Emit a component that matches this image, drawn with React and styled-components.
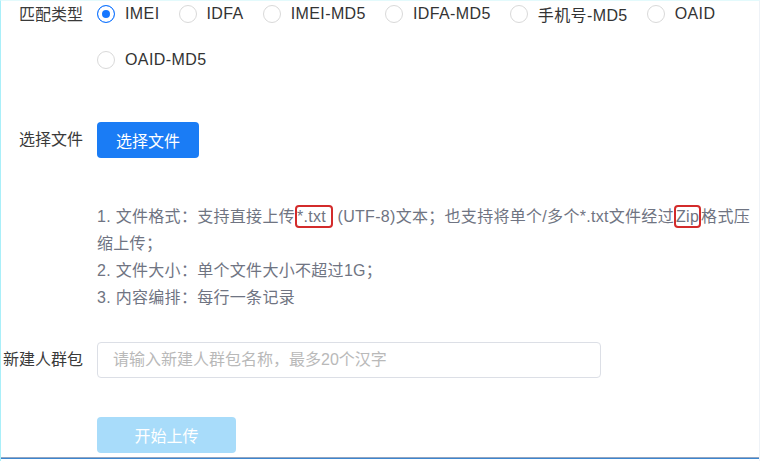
import React, { useState } from 'react';
import styled, { createGlobalStyle } from 'styled-components';

const GlobalStyle = createGlobalStyle`
    html, body {
        margin: 0;
        padding: 0;
        background: #fff;
    }
    body {
        font-family: "Liberation Sans", "Noto Sans CJK SC", sans-serif;
    }
`;

const Page = styled.div`
    box-sizing: border-box;
    width: 760px;
    height: 461px;
    border-left: 1px solid #a9eff9;
    border-top: 1px solid #e3fafc;
    border-right: 1px solid #eef2f7;
    display: flex;
    flex-direction: column;
    overflow: hidden;
`;

const Form = styled.div`
    flex: 1;
    display: flex;
    flex-direction: column;
`;

const Row = styled.div`
    display: flex;
    align-items: ${(p) => (p.top ? 'flex-start' : 'center')};
    gap: 14px;
    margin-top: ${(p) => p.gap || 0}px;
`;

const Label = styled.div`
    flex: 0 0 82px;
    text-align: right;
    font-size: 16px;
    line-height: 28px;
    color: #3a3a3a;
    white-space: nowrap;
`;

const Content = styled.div`
    flex: 1;
    min-width: 0;
    padding-right: 4px;
`;

const RadioGroup = styled.div`
    display: flex;
    flex-wrap: wrap;
    column-gap: 19px;
    row-gap: 18px;
    margin-top: -1px;
`;

const RadioItem = styled.label`
    display: inline-flex;
    align-items: center;
    gap: 10px;
    height: 28px;
    font-size: 16px;
    letter-spacing: 0.4px;
    color: #333;
    cursor: pointer;
`;

const Circle = styled.span`
    box-sizing: border-box;
    width: 18px;
    height: 18px;
    border-radius: 50%;
    border: 1px solid ${(p) => (p.checked ? '#1677ff' : '#d9d9d9')};
    background: ${(p) => (p.checked ? '#1677ff' : '#fff')};
    box-shadow: ${(p) => (p.checked ? 'inset 0 0 0 4px #fff' : 'none')};
`;

const PrimaryButton = styled.button`
    height: 36px;
    width: ${(p) => p.width}px;
    border: none;
    border-radius: 4px;
    background: ${(p) => (p.disabled ? '#a8dcfa' : '#1a7cf5')};
    color: #fff;
    font-family: inherit;
    font-size: 16px;
    cursor: ${(p) => (p.disabled ? 'not-allowed' : 'pointer')};
    padding: 0;
`;

const Tips = styled.div`
    font-size: 16px;
    line-height: 27px;
    letter-spacing: 0.3px;
    color: #6f7482;
`;

const Mark = styled.span`
    display: inline-block;
    border: 2px solid #d32b2b;
    border-radius: 4px;
    line-height: 19px;
    padding: 0;
`;

const Input = styled.input`
    box-sizing: border-box;
    width: 504px;
    height: 36px;
    border: 1px solid #dcdfe6;
    border-radius: 4px;
    padding: 0 15px;
    font-family: inherit;
    font-size: 16px;
    color: #333;
    outline: none;
    &::placeholder {
        color: #b9b9b9;
    }
`;

const BottomEdge = styled.div`
    height: 1px;
    border-top: 1px solid #93a6c2;
    background: #3c86cf;
    margin-bottom: 2px;
`;

const types = ['IMEI', 'IDFA', 'IMEI-MD5', 'IDFA-MD5', '手机号-MD5', 'OAID', 'OAID-MD5'];

const App = () => {
    const [type, setType] = useState('IMEI');
    const [name, setName] = useState('');

    return (
        <Page>
            <GlobalStyle />
            <Form>
                <Row top>
                    <Label>匹配类型</Label>
                    <Content>
                        <RadioGroup>
                            {types.map((t) => (
                                <RadioItem key={t} onClick={() => setType(t)}>
                                    <Circle checked={type === t} />
                                    {t}
                                </RadioItem>
                            ))}
                        </RadioGroup>
                    </Content>
                </Row>

                <Row gap={48}>
                    <Label>选择文件</Label>
                    <Content>
                        <PrimaryButton width={102}>选择文件</PrimaryButton>
                    </Content>
                </Row>

                <Row gap={45}>
                    <Label />
                    <Content>
                        <Tips>
                            1. 文件格式：支持直接上传<Mark>*.txt&nbsp;</Mark> (UTF-8)文本；也支持将单个/多个*.txt文件经过<Mark>Zip</Mark>格式压缩上传；
                            <br />
                            2. 文件大小：单个文件大小不超过1G；
                            <br />
                            3. 内容编排：每行一条记录
                        </Tips>
                    </Content>
                </Row>

                <Row gap={31}>
                    <Label>新建人群包</Label>
                    <Content>
                        <Input
                            value={name}
                            onChange={(e) => setName(e.target.value)}
                            placeholder="请输入新建人群包名称，最多20个汉字"
                        />
                    </Content>
                </Row>

                <Row gap={39}>
                    <Label />
                    <Content>
                        <PrimaryButton width={139} disabled>开始上传</PrimaryButton>
                    </Content>
                </Row>
            </Form>
            <BottomEdge />
        </Page>
    );
};

export default App;
